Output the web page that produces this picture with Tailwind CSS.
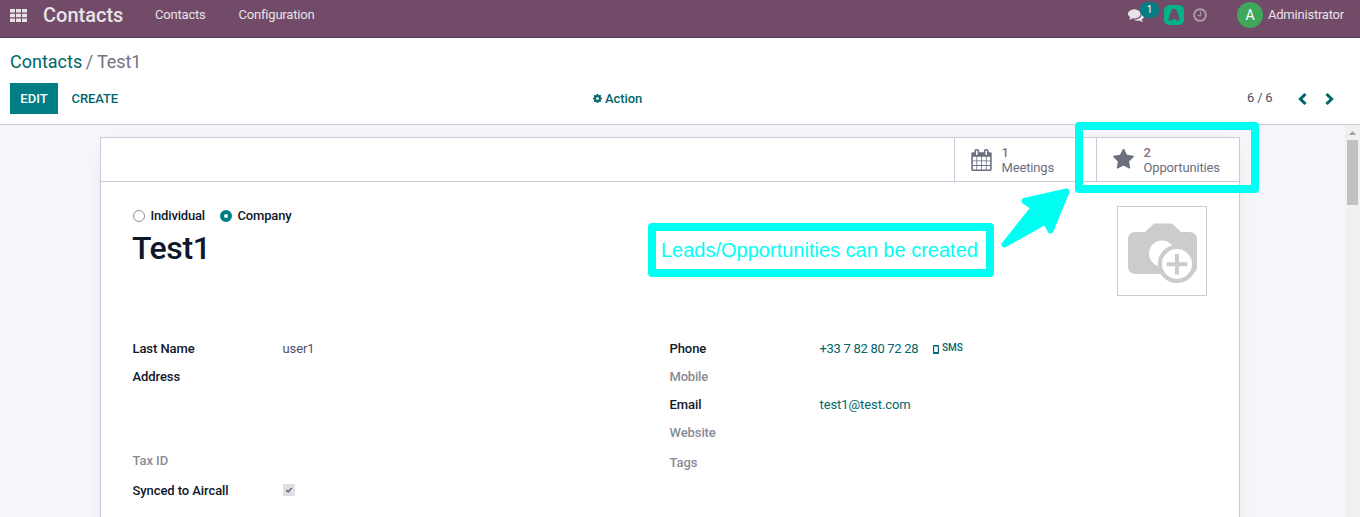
<!DOCTYPE html>
<html lang="en">
<head>
<meta charset="utf-8">
<title>Contacts - Test1</title>
<script src="https://cdn.jsdelivr.net/npm/@tailwindcss/browser@4"></script>
</head>
<body class="relative flex h-[517px] w-[1360px] flex-col overflow-hidden bg-white font-['Roboto',sans-serif] text-[13px] leading-5 text-[#4c4f63]">

<header class="flex h-[38px] shrink-0 items-start border-b border-[#523a4c] bg-[#714b67] text-[#e9e2e7]">
  <svg class="mt-[9px] ml-[10px] h-[13px] w-[17px]" viewBox="0 0 17 13" fill="currentColor"><path d="M0 0h5v3.500H0zM6 0h5v3.500H6zM12 0h5v3.500h-5zM0 4.700h5v3.600H0zM6 4.700h5v3.600H6zM12 4.700h5v3.600h-5zM0 9.500h5V13H0zM6 9.500h5V13H6zM12 9.500h5V13h-5z"/></svg>
  <div class="ml-4 w-[112px] pt-[3px] text-[20px] leading-6 font-medium">Contacts</div>
  <nav class="flex gap-[33px] pt-[5px] tracking-[-0.2px]"><span>Contacts</span><span>Configuration</span></nav>
  <div class="ml-auto flex items-start pr-4">
    <div class="relative mt-[7px] h-4 w-9">
      <svg class="h-4 w-4" viewBox="0 0 1792 1792" fill="currentColor"><path d="M1408 768q0 139-94 257t-256.500 186.500-353.500 68.500q-86 0-176-16-124 88-278 128-36 9-86 16h-3q-11 0-20.500-8t-11.500-21q-1-3-1-6.500t.5-6.500 2-6l2.500-5 3.500-5.500 4-5 4.500-5 4-4.500q5-6 23-25t26-29.500 22.500-29 25-38.500 20.500-44q-124-72-195-177t-71-224q0-139 94-257t256.500-186.500 353.500-68.500 353.500 68.500 256.500 186.500 94 257zm384 256q0 120-71 224.500t-195 176.500q10 24 20.500 44t25 38.500 22.500 29 26 29.500 23 25q1 1 4 4.500t4.500 5 4 5 3.500 5.500l2.500 5 2 6 .5 6.500-1 6.500q-3 14-13 22t-22 7q-50-7-86-16-154-40-278-128-90 16-176 16-271 0-472-132 58 4 88 4 161 0 309-45t264-129q125-92 192-212t67-254q0-77-23-152 129 71 204 178t75 230z"/></svg>
      <span class="absolute -top-[5px] left-[12px] flex h-4 w-[19px] items-center justify-center rounded-full bg-[#017e84] text-[10px] leading-none text-white">1</span>
    </div>
    <svg class="mt-[5px] h-5 w-5" viewBox="0 0 20 20"><rect width="20" height="20" rx="5.500" fill="#00b388"/><path d="M8.200 4.200Q10 3.600 11.800 4.200Q12.300 4.500 12.600 5.200L15.500 14Q15.900 15.500 14.500 15.600Q13 15.800 12.600 15.400L11.700 14.200Q10 13.700 8.300 14.200L7.400 15.400Q7 15.800 5.500 15.600Q4.100 15.500 4.500 14L7.400 5.200Q7.700 4.500 8.200 4.200Z" fill="#714b67"/></svg>
    <svg class="mt-[7px] ml-[8px] h-4 w-4 text-[#ab97a6]" viewBox="0 0 1792 1792" fill="currentColor"><path d="M1024 544v448q0 14-9 23t-23 9h-320q-14 0-23-9t-9-23v-64q0-14 9-23t23-9h224v-352q0-14 9-23t23-9h64q14 0 23 9t9 23zm416 352q0-148-73-273t-198-198-273-73-273 73-198 198-73 273 73 273 198 198 273 73 273-73 198-198 73-273zm224 0q0 209-103 385.500t-279.500 279.500-385.500 103-385.500-103-279.500-279.500-103-385.500 103-385.500 279.500-279.500 385.500-103 385.500 103 279.500 279.500 103 385.500z"/></svg>
    <span class="mt-[2px] ml-[29px] flex h-[26px] w-[26px] items-center justify-center rounded-full bg-[#40a65c] text-[14px] text-white">A</span>
    <span class="mt-[5px] ml-[5px] w-[76px] tracking-[-0.22px] whitespace-nowrap">Administrator</span>
  </div>
</header>

<section class="flex h-[87px] shrink-0 flex-col border-b border-[#c9ccd6] bg-white px-[10px] text-[#01666b]">
  <div class="mt-3 text-[18px] leading-6">Contacts <span class="-ml-px tracking-[-0.1px] text-[#71747f]">/ Test1</span></div>
  <div class="mt-[9px] flex h-[31px] items-center">
    <div class="flex w-[583px] items-center gap-[13.500px] font-medium">
      <button class="h-[31px] w-12 bg-[#017e84] font-medium text-white">EDIT</button>
      <button class="font-medium tracking-[-0.1px]">CREATE</button>
    </div>
    <button class="flex items-center gap-[2px] font-medium">
      <svg class="h-[9px] w-[9px]" viewBox="128 128 1536 1536" fill="currentColor"><path d="M1152 896q0-106-75-181t-181-75-181 75-75 181 75 181 181 75 181-75 75-181zm512-109v222q0 12-8 23t-20 13l-185 28q-19 54-39 91 35 50 107 138 10 12 10 25t-9 23q-27 37-99 108t-94 71q-12 0-26-9l-138-108q-44 23-91 38-16 136-29 186-7 28-36 28h-222q-14 0-24.500-8.500t-11.500-21.500l-28-184q-49-16-90-37l-141 107q-10 9-25 9-14 0-25-11-126-114-165-168-7-10-7-23 0-12 8-23 15-21 51-66.500t54-70.500q-27-50-41-99l-183-27q-13-2-21-12.500t-8-23.500v-222q0-12 8-23t19-13l186-28q14-46 39-92-40-57-107-138-10-12-10-24 0-10 9-23 26-36 98.500-107.500t94.500-71.500q13 0 26 10l138 107q44-23 91-38 16-136 29-186 7-28 36-28h222q14 0 24.500 8.500t11.500 21.500l28 184q49 16 90 37l142-107q9-9 24-9 13 0 25 10 129 119 165 170 7 8 7 22 0 12-8 23-15 21-51 66.500t-54 70.500q26 50 41 98l183 28q13 2 21 12.500t8 23.500z"/></svg>
      <span class="ml-px tracking-[-0.1px]">Action</span>
    </button>
    <div class="ml-auto flex items-center pr-4">
      <span class="-mt-px mr-[25px] w-[26px] tracking-[-0.2px] whitespace-nowrap text-[#4c4f63]">6 / 6</span>
      <svg class="mr-[18px] h-3 w-[9px]" viewBox="0 0 9 12" fill="none" stroke="currentColor" stroke-width="3"><path d="M7.500 1L2.400 6l5.100 5"/></svg>
      <svg class="h-3 w-[9px]" viewBox="0 0 9 12" fill="none" stroke="currentColor" stroke-width="3"><path d="M1.500 1l5.100 5-5.100 5"/></svg>
    </div>
  </div>
</section>

<div class="flex min-h-0 flex-1 bg-[#f5f6fa]">
  <main class="min-w-0 flex-1 overflow-hidden pt-3 pl-[100px]">
    <div class="h-[420px] w-[1140px] border border-[#c9ccd6] bg-white shadow-[0_5px_20px_-15px_rgba(0,0,0,0.4)]">
      <div class="flex h-11 justify-end border-b border-[#c9ccd6] text-[#6b6f7e]">
        <div class="flex w-[142px] items-center border-l border-[#c9ccd6] pl-4">
          <svg class="h-[22px] w-[21px]" viewBox="64 0 1664 1792" fill="currentColor"><path d="M192 1664h288v-288h-288v288zm352 0h320v-288h-320v288zm-352-352h288v-320h-288v320zm352 0h320v-320h-320v320zm-352-384h288v-288h-288v288zm736 736h320v-288h-320v288zm-384-736h320v-288h-320v288zm768 736h288v-288h-288v288zm-384-352h320v-320h-320v320zm-352-864v-288q0-13-9.500-22.500t-22.500-9.500h-64q-13 0-22.500 9.500t-9.500 22.500v288q0 13 9.500 22.500t22.500 9.500h64q13 0 22.500-9.500t9.500-22.500zm736 864h288v-320h-288v320zm-384-384h320v-288h-320v288zm384 0h288v-288h-288v288zm32-480v-288q0-13-9.500-22.500t-22.500-9.500h-64q-13 0-22.500 9.500t-9.500 22.500v288q0 13 9.500 22.500t22.500 9.500h64q13 0 22.500-9.500t9.500-22.500zm384-64v1280q0 52-38 90t-90 38h-1408q-52 0-90-38t-38-90v-1280q0-52 38-90t90-38h128v-96q0-66 47-113t113-47h64q66 0 113 47t47 113v96h384v-96q0-66 47-113t113-47h64q66 0 113 47t47 113v96h128q52 0 90 38t38 90z"/></svg>
          <div class="ml-[9.500px] leading-[15px] tracking-[-0.15px]"><div class="font-medium text-[#8d6b84]">1</div><div>Meetings</div></div>
        </div>
        <div class="flex w-[143px] items-center border-l border-[#c9ccd6] pl-4">
          <svg class="h-[21px] w-[21px]" viewBox="64 64 1664 1664" fill="currentColor"><path d="M1728 647q0 22-26 48l-363 354 86 500q1 7 1 20 0 21-10.500 35.500t-30.500 14.500q-19 0-40-12l-449-236-449 236q-22 12-40 12-21 0-31.500-14.500t-10.500-35.500q0-6 2-20l86-500-364-354q-25-27-25-48 0-37 56-46l502-73 225-455q19-41 49-41t49 41l225 455 502 73q56 9 56 46z"/></svg>
          <div class="ml-[9.500px] leading-[15px] tracking-[-0.17px]"><div class="font-medium text-[#8d6b84]">2</div><div>Opportunities</div></div>
        </div>
      </div>

      <div class="flex h-[153px] justify-between pt-6 pr-8 pl-8">
        <div class="text-[#0f172a]">
          <div class="flex h-5 items-center font-medium tracking-[-0.17px]">
            <span class="mr-[5.500px] h-3 w-3 rounded-full border border-[#8f8f9b]"></span><span class="mr-[15px] w-[54.500px]">Individual</span>
            <span class="mr-[5.500px] h-3 w-3 rounded-full border-4 border-[#017e84]"></span><span>Company</span>
          </div>
          <h1 class="-ml-px text-[32px] leading-[44px] font-medium tracking-[-0.4px]">Test1</h1>
        </div>
        <div class="h-[90px] w-[90px] border border-[#c9ccd6]">
          <svg class="h-[88px] w-[88px]" viewBox="0 0 88 88"><path d="M17 25h10l9-8.500h18l9 8.500h8q8 0 8 8v27q0 7-8 7H18q-8 0-8-8V33q0-8 7-8z" fill="#ccc"/><circle cx="44" cy="46.500" r="13" fill="#fff"/><circle cx="59" cy="57" r="19.200" fill="#ccc"/><circle cx="59" cy="57" r="15" fill="#fff"/><path d="M59 47v20.500M48.700 57.200h20.800" stroke="#ccc" stroke-width="4"/></svg>
        </div>
      </div>

      <div class="grid grid-cols-[537px_1fr] pl-[31.500px] font-medium tracking-[-0.08px] text-[#0f172a]">
        <div class="grid auto-rows-[28px] grid-cols-[150px_1fr] content-start items-center">
          <span>Last Name</span><span class="font-normal text-[#4c4f63]">user1</span>
          <span>Address</span><span></span>
          <span class="col-span-2 h-7"></span><span class="col-span-2 h-7"></span>
          <span class="text-[#888b95]">Tax ID</span><span></span>
          <span class="mt-1">Synced to Aircall</span>
          <span class="mt-[2px] ml-[0.500px] flex h-3 w-3 items-center justify-center bg-[#dee0e5]"><svg class="h-2 w-2" viewBox="0 0 8 8" fill="none" stroke="#666b78" stroke-width="1.700"><path d="M1.200 4l1.900 1.800L6.800 2"/></svg></span>
        </div>
        <div class="grid auto-rows-[28px] grid-cols-[150px_1fr] content-start items-center">
          <span>Phone</span>
          <span class="flex items-center font-normal text-[#01666b]"><span class="w-[99.500px] tracking-[-0.3px] whitespace-nowrap">+33 7 82 80 72 28</span>
            <svg class="mr-[3px] ml-[14px] h-[9px] w-[6px]" viewBox="0 0 6 9"><path d="M1 0h4q1 0 1 1v7q0 1-1 1H1Q0 9 0 8V1q0-1 1-1zM1.200 1.400v5.600h3.600V1.400z" fill="currentColor" fill-rule="evenodd"/></svg><b class="-mt-[2px] text-[10px] font-medium tracking-normal">SMS</b></span>
          <span class="tracking-[-0.2px] text-[#888b95]">Mobile</span><span></span>
          <span>Email</span><span class="font-normal text-[#01666b]">test1@test.com</span>
          <span class="text-[#888b95]">Website</span><span></span>
          <span class="mt-1 text-[#888b95]">Tags</span><span></span>
        </div>
      </div>
    </div>
  </main>
  <aside class="flex w-[15px] flex-col items-center bg-[#f1f1f1]">
    <svg class="mt-[6px] h-[4px] w-[7px]" viewBox="0 0 7 4"><path d="M0 4L3.500 0 7 4z" fill="#a0a0a0"/></svg>
    <div class="mt-[5px] h-[65px] w-[11px] bg-[#c1c1c1]"></div>
  </aside>
</div>

<div class="absolute top-[122px] left-[1075px] h-[71px] w-[184px] rounded-[4px] border-8 border-[#00fff2]"></div>
<div class="absolute top-[223px] left-[648px] flex h-[54px] w-[346px] items-center rounded-[4px] border-8 border-[#00fff2] pl-[5px] font-['Liberation_Sans',sans-serif] text-[20px] whitespace-nowrap text-[#00fff2]">Leads/Opportunities can be created</div>
<svg class="absolute top-[186px] left-[998px] h-[64px] w-[75px]" viewBox="998 186 75 64" fill="#00fff2" stroke="#00fff2" stroke-width="6" stroke-linejoin="round"><path d="M1066.500 191.500L1024.500 201l9.500 6.500L1004.500 244.500l41-23 5 9z"/></svg>
</body>
</html>
